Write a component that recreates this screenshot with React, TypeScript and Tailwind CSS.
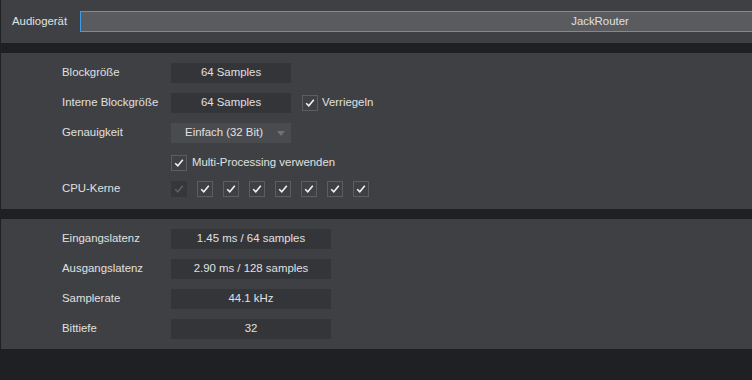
import React from "react";

function Check({ disabled = false }: { disabled?: boolean }) {
  return (
    <div
      className={
        disabled
          ? "w-4 h-4 shrink-0 flex items-center justify-center bg-[#36373b]"
          : "w-4 h-4 shrink-0 flex items-center justify-center border border-[#5c5d61] bg-[#3f4044]"
      }
    >
      <svg width="12" height="12" viewBox="0 0 12 12">
        <polyline
          points="2.2,6.2 4.8,8.8 9.8,2.8"
          fill="none"
          stroke={disabled ? "#5e5f63" : "#f2f2f2"}
          strokeWidth="1.6"
        />
      </svg>
    </div>
  );
}

function Field({ w, children }: { w: string; children: React.ReactNode }) {
  return (
    <div className={`${w} h-5 shrink-0 bg-[#343539] flex items-center justify-center`}>
      {children}
    </div>
  );
}

function Row({ label, children, className = "" }: { label?: string; children: React.ReactNode; className?: string }) {
  return (
    <div className={`flex items-center h-5 ${className}`}>
      <div className="w-[109px] shrink-0">{label}</div>
      {children}
    </div>
  );
}

export default function App() {
  return (
    <div
      className="w-[752px] h-[380px] overflow-hidden bg-[#1f2024] text-[11.4px] text-[#e0e0e0]"
      style={{ fontFamily: '"Liberation Sans", Arial, sans-serif' }}
    >
      <div className="ml-px h-[43px] bg-[#3f4044] flex items-center overflow-hidden">
        <div className="w-[79px] shrink-0 pl-[11px]">Audiogerät</div>
        <div className="w-[1040px] h-[21px] shrink-0 border border-[#3a9de6] bg-[#5a5b5f] flex items-center justify-center">
          JackRouter
        </div>
      </div>

      <div className="ml-px mt-[10px] bg-[#3f4044] pl-[61px] pt-[10px] pb-[10px] flex flex-col">
        <Row label="Blockgröße">
          <Field w="w-[120px]">64 Samples</Field>
        </Row>
        <Row label="Interne Blockgröße" className="mt-[10px]">
          <Field w="w-[120px]">64 Samples</Field>
          <div className="ml-[11px] flex items-center gap-[4px]">
            <Check />
            <span>Verriegeln</span>
          </div>
        </Row>
        <Row label="Genauigkeit" className="mt-[10px]">
          <div className="w-[120px] h-5 shrink-0 bg-[#4a4b4f] flex items-center pr-[6px]">
            <span className="flex-1 text-center">Einfach (32 Bit)</span>
            <svg width="8" height="5" viewBox="0 0 8 5">
              <polygon points="0,0 8,0 4,5" fill="#707175" />
            </svg>
          </div>
        </Row>
        <Row className="mt-[10px]">
          <div className="flex items-center gap-[5px]">
            <Check />
            <span>Multi-Processing verwenden</span>
          </div>
        </Row>
        <Row label="CPU-Kerne" className="mt-[6px]">
          <div className="flex items-center gap-[10px]">
            <Check disabled />
            <Check />
            <Check />
            <Check />
            <Check />
            <Check />
            <Check />
            <Check />
          </div>
        </Row>
      </div>

      <div className="ml-px mt-[10px] bg-[#3f4044] pl-[61px] pt-[10px] pb-[10px] flex flex-col gap-[10px]">
        <Row label="Eingangslatenz">
          <Field w="w-[160px]">1.45 ms / 64 samples</Field>
        </Row>
        <Row label="Ausgangslatenz">
          <Field w="w-[160px]">2.90 ms / 128 samples</Field>
        </Row>
        <Row label="Samplerate">
          <Field w="w-[160px]">44.1 kHz</Field>
        </Row>
        <Row label="Bittiefe">
          <Field w="w-[160px]">32</Field>
        </Row>
      </div>
    </div>
  );
}
